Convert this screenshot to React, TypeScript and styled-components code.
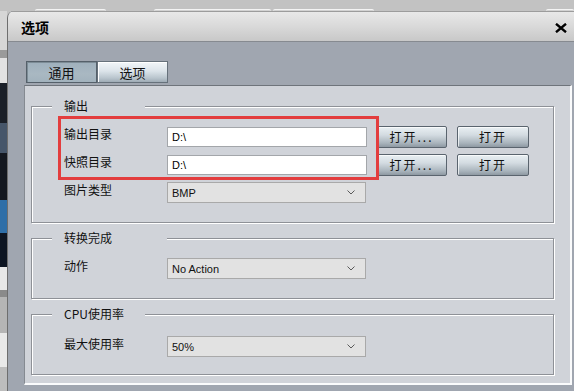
import styled, { createGlobalStyle } from "styled-components";

const cjk = `"Noto Sans CJK SC", "Noto Sans", sans-serif`;
const latin = `"Liberation Sans", "Noto Sans CJK SC", sans-serif`;

const GlobalStyle = createGlobalStyle`
    html, body {
        margin: 0;
        padding: 0;
        overflow: hidden;
        background: #c2c2c2;
    }
    * {
        box-sizing: border-box;
    }
`;

/* bits of the app behind the dialog, only the strips that peek out */
const stripTabs = [
    { left: 35, width: 75 },
    { left: 48, width: 124 },
    { left: 2, width: 106 },
    { left: 172, width: 30 },
];

const stripBlocks = [
    { h: 39, c: "#d6d6d6" },
    { h: 8, c: "#9a9a9a" },
    { h: 25, c: "#e2e2e2" },
    { h: 40, c: "#1a1f28" },
    { h: 30, c: "#46566a" },
    { h: 47, c: "#141820" },
    { h: 33, c: "#2f6fa8" },
    { h: 34, c: "#0d1522" },
    { h: 23, c: "#e8e8e8" },
    { h: 7, c: "#8a8a8a" },
    { h: 36, c: "#b5b5b5" },
    { h: 34, c: "#e9e9e9" },
    { h: 30, c: "#bdbdbd" },
];

const outputRows = [
    { label: "输出目录", value: "D:\\" },
    { label: "快照目录", value: "D:\\" },
];

function Chevron() {
    return (
        <svg width="8" height="5" viewBox="0 0 8 5">
            <polyline points="0.5,0.5 4,4 7.5,0.5" fill="none" stroke="#5a5a5a" strokeWidth="1" />
        </svg>
    );
}

function Select({ value }: { value: string }) {
    return (
        <SelectBox>
            <span>{value}</span>
            <Chevron />
        </SelectBox>
    );
}

export default function App() {
    return (
        <>
            <GlobalStyle />
            <Desktop>
                <TopStrip>
                    {stripTabs.map((t, i) => (
                        <StripTab key={i} $left={t.left} $width={t.width} />
                    ))}
                </TopStrip>
                <LeftStrip>
                    {stripBlocks.map((b, i) => (
                        <StripBlock key={i} $h={b.h} $c={b.c} />
                    ))}
                </LeftStrip>

                <Dialog>
                    <TitleBar>
                        <Title>选项</Title>
                        <CloseButton aria-label="close">
                            <svg width="12" height="10" viewBox="0 0 12 10">
                                <path d="M1 0.8 L11 9.2 M11 0.8 L1 9.2" stroke="#000" strokeWidth="2.4" />
                            </svg>
                        </CloseButton>
                    </TitleBar>

                    <Body>
                        <TabRow>
                            <Tab $active>通用</Tab>
                            <Tab>选项</Tab>
                        </TabRow>

                        <Panel>
                            <Group>
                                <Legend $width={93}>输出</Legend>
                                <OutputGrid>
                                    {outputRows.map((r, i) => (
                                        <Row key={r.label} $row={i + 1}>
                                            <Label>{r.label}</Label>
                                            <TextInput>{r.value}</TextInput>
                                            <Button>打开...</Button>
                                            <Button $wide>打开</Button>
                                        </Row>
                                    ))}
                                    <Row $row={3}>
                                        <Label>图片类型</Label>
                                        <Select value="BMP" />
                                    </Row>
                                    <Highlight />
                                </OutputGrid>
                            </Group>

                            <Group>
                                <Legend $width={115}>转换完成</Legend>
                                <Rows>
                                    <Label>动作</Label>
                                    <Select value="No Action" />
                                </Rows>
                            </Group>

                            <Group>
                                <Legend $width={93}>CPU使用率</Legend>
                                <Rows $top={14} $bottom={17}>
                                    <Label>最大使用率</Label>
                                    <Select value="50%" />
                                </Rows>
                            </Group>
                        </Panel>
                    </Body>
                </Dialog>
            </Desktop>
        </>
    );
}

/* -------------------- Background -------------------- */

const Desktop = styled.div`
    width: 574px;
    height: 391px;
    display: grid;
    grid-template-columns: 7px 1fr;
    grid-template-rows: 11px 380px;
    overflow: hidden;
`;

const TopStrip = styled.div`
    grid-column: 1 / 3;
    display: flex;
    align-items: flex-end;
    background: #c2c2c2;
`;

const StripTab = styled.div<{ $left: number; $width: number }>`
    margin-left: ${({ $left }) => $left}px;
    width: ${({ $width }) => $width}px;
    height: 2px;
    border-top: 1px solid #f4f4f4;
    border-radius: 3px 3px 0 0;
    background: #d2d2d2;
`;

const LeftStrip = styled.div`
    display: flex;
    flex-direction: column;
    overflow: hidden;
`;

const StripBlock = styled.div<{ $h: number; $c: string }>`
    height: ${({ $h }) => $h}px;
    flex-shrink: 0;
    background: ${({ $c }) => $c};
`;

/* -------------------- Dialog -------------------- */

const Dialog = styled.div`
    display: flex;
    flex-direction: column;
    background: #a0a6b0;
    border-left: 1px solid #6e6e6e;
    border-top-left-radius: 7px;
    overflow: hidden;
`;

const TitleBar = styled.div`
    height: 31px;
    flex-shrink: 0;
    display: flex;
    align-items: center;
    justify-content: space-between;
    padding: 0 7px 0 13px;
    background: linear-gradient(#e8e8e8, #d9d9d9 50%, #c8c8c8);
    border-top: 1px solid #9c9c9c;
    border-bottom: 1px solid #868a90;
`;

const Title = styled.div`
    font: 700 14px ${cjk};
    color: #000;
    padding-top: 1px;
`;

const CloseButton = styled.div`
    display: flex;
    padding-top: 3px;
`;

const Body = styled.div`
    flex: 1;
    padding: 19px 2px 0 16px;
    display: flex;
    flex-direction: column;
`;

const TabRow = styled.div`
    display: flex;
    padding-left: 2px;
    margin-bottom: 2px;
`;

const Tab = styled.div<{ $active?: boolean }>`
    width: 71px;
    height: 22px;
    display: flex;
    align-items: center;
    justify-content: center;
    font: 13px ${cjk};
    color: #111;
    border: 1px solid ${({ $active }) => ($active ? "#55606a" : "#66717b")};
    background: ${({ $active }) =>
        $active
            ? "linear-gradient(#9fb0bc, #a9b8c2 60%, #a2b2bd)"
            : "linear-gradient(#f2f6f9, #dce4ea 45%, #b9c5cd 80%, #9eabb5)"};
    box-shadow: ${({ $active }) =>
        $active ? "inset 1px 1px 0 #7d8c96" : "inset 1px 1px 0 #ffffff"};
`;

const Panel = styled.div`
    height: 300px;
    flex-shrink: 0;
    display: flex;
    flex-direction: column;
    gap: 7px;
    padding: 12px 16px 0 6px;
    background: #d0d3d9;
    border-top: 1px solid #6f747b;
    border-left: 1px solid #858a91;
    border-right: 2px solid #fafbfc;
    border-bottom: 2px solid #fafbfc;
`;

/* -------------------- Group boxes -------------------- */

const Group = styled.fieldset`
    margin: 0;
    padding: 0;
    min-width: 0;
    border: 1px solid #8e9197;
    box-shadow: inset 1px 1px 0 #ffffff, 1px 1px 0 #ffffff;
`;

const Legend = styled.legend<{ $width: number }>`
    width: ${({ $width }) => $width}px;
    margin-left: 20px;
    padding: 0 0 0 12px;
    height: 16px;
    font: 12px/16px ${cjk};
    color: #111;
    background: #d0d3d9;
`;

const Rows = styled.div<{ $top?: number; $bottom?: number }>`
    display: grid;
    grid-template-columns: 103px 200px;
    grid-auto-rows: 21px;
    align-items: center;
    padding: ${({ $top = 12, $bottom = 19 }) => `${$top}px 0 ${$bottom}px 32px`};
`;

const OutputGrid = styled(Rows)`
    grid-template-columns: 103px 200px 80px 82px;
    row-gap: 7px;
`;

/* each row spreads its cells over the parent grid, placed explicitly so the highlight frame doesn't push them */
const Row = styled.div<{ $row: number }>`
    display: contents;

    & > * {
        grid-row: ${({ $row }) => $row};
    }
    & > :nth-child(1) { grid-column: 1; }
    & > :nth-child(2) { grid-column: 2; }
    & > :nth-child(3) { grid-column: 3; }
    & > :nth-child(4) { grid-column: 4; }
`;

const Highlight = styled.div`
    grid-column: 1 / 3;
    grid-row: 1 / 3;
    align-self: stretch;
    margin: -10px -12px -5px -6px;
    border: 3px solid #e33d3e;
    pointer-events: none;
    z-index: 1;
`;

const Label = styled.div`
    font: 12px/16px ${cjk};
    color: #111;
    white-space: nowrap;
    margin-bottom: 5px;
`;

const TextInput = styled.div`
    height: 20px;
    display: flex;
    align-items: center;
    padding-left: 4px;
    font: 11px ${latin};
    color: #000;
    background: #ffffff;
    border: 1px solid #a3a6aa;
`;

const SelectBox = styled.div`
    width: 199px;
    height: 21px;
    display: flex;
    align-items: center;
    justify-content: space-between;
    padding: 0 10px 0 4px;
    font: 11px ${latin};
    color: #111;
    background: #e2e2e2;
    border: 1px solid #a9a9a9;
`;

const Button = styled.div<{ $wide?: boolean }>`
    justify-self: end;
    width: ${({ $wide }) => ($wide ? 72 : 71)}px;
    height: 22px;
    display: flex;
    align-items: center;
    justify-content: center;
    font: 12px ${cjk};
    letter-spacing: 2px;
    color: #111;
    border: 1px solid #5a646e;
    border-radius: 2px;
    background: linear-gradient(#e9eff3, #d3dbe1 40%, #a9b4bc 80%, #8e99a2);
    box-shadow: inset 1px 1px 0 rgba(255, 255, 255, 0.7);
`;
